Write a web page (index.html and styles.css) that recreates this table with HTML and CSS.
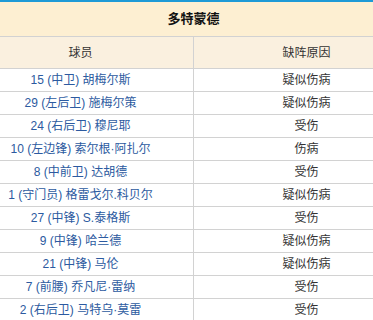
FILE: index.html
```html
<!DOCTYPE html>
<html lang="zh-CN">
<head>
<meta charset="utf-8">
<link rel="stylesheet" href="styles.css">
</head>
<body>
<div class="wrap">
<table class="tbl">
<thead>
<tr class="title"><th colspan="2">多特蒙德</th></tr>
<tr class="head"><th class="c1">球员</th><th class="c2">缺阵原因</th></tr>
</thead>
<tbody>
<tr><td class="c1"><a>15 (中卫) 胡梅尔斯</a></td><td class="c2">疑似伤病</td></tr>
<tr><td class="c1"><a>29 (左后卫) 施梅尔策</a></td><td class="c2">疑似伤病</td></tr>
<tr><td class="c1"><a>24 (右后卫) 穆尼耶</a></td><td class="c2">受伤</td></tr>
<tr><td class="c1"><a>10 (左边锋) 索尔根·阿扎尔</a></td><td class="c2">伤病</td></tr>
<tr><td class="c1"><a>8 (中前卫) 达胡德</a></td><td class="c2">受伤</td></tr>
<tr><td class="c1"><a>1 (守门员) 格雷戈尔.科贝尔</a></td><td class="c2">疑似伤病</td></tr>
<tr><td class="c1"><a>27 (中锋) S.泰格斯</a></td><td class="c2">受伤</td></tr>
<tr><td class="c1"><a>9 (中锋) 哈兰德</a></td><td class="c2">疑似伤病</td></tr>
<tr><td class="c1"><a>21 (中锋) 马伦</a></td><td class="c2">疑似伤病</td></tr>
<tr><td class="c1"><a>7 (前腰) 乔凡尼·雷纳</a></td><td class="c2">受伤</td></tr>
<tr><td class="c1"><a>2 (右后卫) 马特乌·莫雷</a></td><td class="c2">受伤</td></tr>
</tbody>
</table>
</div>
</body>
</html>
```
FILE: styles.css
```css
html, body {
  margin: 0;
  padding: 0;
  background: #ffffff;
  overflow: hidden;
}
.wrap {
  width: 373px;
  overflow: hidden;
}
.tbl {
  width: 453px;
  margin-left: -33px;
  border-collapse: collapse;
  table-layout: fixed;
  font-family: "Liberation Sans", "Noto Sans CJK SC", sans-serif;
  font-size: 12px;
  border-top: 2px solid #1e9ad6;
}
.tbl th, .tbl td {
  padding: 0;
  text-align: center;
  border: 1px solid #d2d2d2;
  border-top: 0;
  font-weight: normal;
  line-height: 16px;
}
.c1 { width: 233px; }
.c2 { width: 219px; }
.title th {
  background: #fdefd2;
  height: 34px;
  font-size: 13px;
  font-weight: bold;
  color: #111111;
}
.head th {
  background: #faf0df;
  height: 31px;
  color: #333333;
  font-size: 12px;
}
.tbl td {
  height: 22px;
  color: #333333;
}
.tbl td a {
  color: #2c5aa0;
  text-decoration: none;
}
```
